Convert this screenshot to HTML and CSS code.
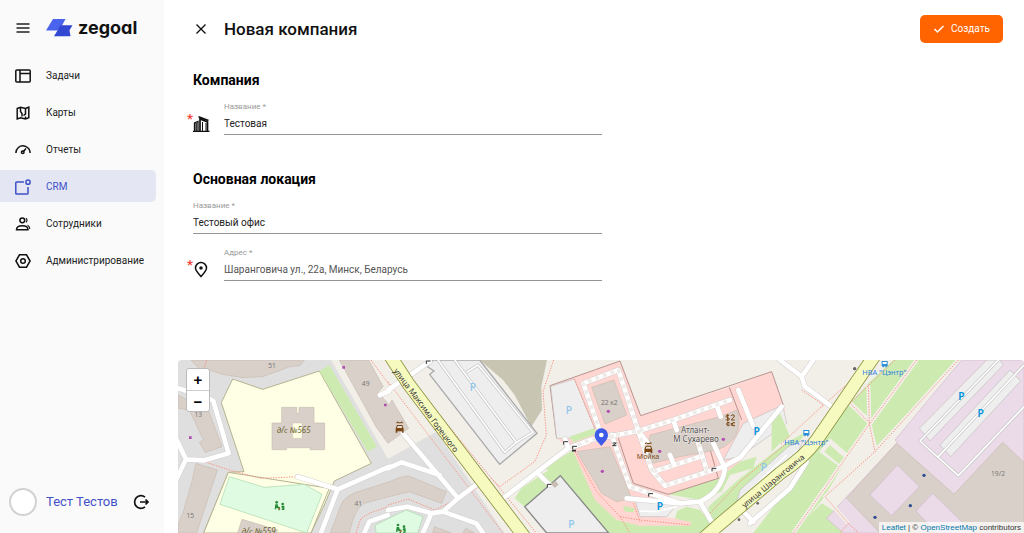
FILE: index.html
```html
<!DOCTYPE html>
<html lang="ru">
<head>
<meta charset="utf-8">
<title>Новая компания</title>
<link rel="stylesheet" href="styles.css">
</head>
<body>
<div class="app">
  <aside class="sidebar">
    <div class="brand">
      <button class="icon-btn" aria-label="Меню"><svg width="14" height="12" viewBox="0 0 14 12" stroke="#222" stroke-width="1.5"><path d="M0.500 2h13M.5 6h13M.5 10h13"/></svg></button>
      <a class="logo" href="#">
        <svg width="28" height="18" viewBox="0 0 28 18"><path d="M7 0h12.500L16 6.500 11.500 11.500H0z" fill="#4a63ec"/><path d="M14.500 6.300H26.500l-3 5L24.500 17.300H8l3.500-5.800z" fill="#3348d2"/></svg>
        <span>zegoal</span>
      </a>
    </div>
    <nav class="menu">
      <a href="#"><svg viewBox="0 0 16 16"><rect x=".8" y="2" width="14.400" height="12" rx="1"/><path d="M5 2v12M5 5.500h10" /></svg>Задачи</a>
      <a href="#"><svg viewBox="0 0 16 16"><path d="M2.200 3.500 5.500 2.200l5 1.300 3.300-1.300v10.500l-3.300 1.300-5-1.300-3.300 1.300zM5.500 2.500v4l1.500 2v3M10.500 3.500v5.500l-2 1.500M10.500 11.500v2"/></svg>Карты</a>
      <a href="#"><svg viewBox="0 0 16 16"><path d="M.9 11a7.100 7.100 0 0 1 2.500-5.500A7.200 7.200 0 0 1 15.100 11"/><path d="m8 10 3-3.500"/><circle cx="7.700" cy="10.200" r="1.300"/></svg>Отчеты</a>
      <a href="#" class="active"><svg viewBox="0 0 16 16"><path d="M9 3H1.500a.7.7 0 0 0-.7.700v10.500c0 .5.300.8.800.8h10.600c.5 0 .8-.3.800-.8V8"/><circle cx="13" cy="3.200" r="2.100"/></svg>CRM</a>
      <a href="#"><svg viewBox="0 0 16 16"><circle cx="7.300" cy="4.300" r="2.400"/><path d="M1.500 13.800c0-2.500 2-4 5.800-4s5.700 1.500 5.700 4z"/><path stroke-width="1.100" d="M11 2.200c1.300 1 1.300 3.200 0 4.200M12.500 9.300c1.500.8 2.300 2 2.300 3.700"/></svg>Сотрудники</a>
      <a href="#"><svg viewBox="0 0 16 16"><path d="M4.500 1.800h7L15.100 8l-3.600 6.200h-7L.9 8z"/><circle cx="8" cy="8" r="2.300"/></svg>Администрирование</a>
    </nav>
    <div class="user">
      <span class="avatar"></span>
      <a href="#" class="user-name">Тест Тестов</a>
      <button class="icon-btn" aria-label="Выйти"><svg width="17" height="16" viewBox="0 0 17 16" fill="none" stroke="#111" stroke-width="1.700"><path d="M12 3.200A6.300 6.300 0 1 0 12 12.800M7 8h8M12.500 5.500 15 8l-2.500 2.500"/></svg></button>
    </div>
  </aside>

  <main class="main">
    <header class="topbar">
      <button class="icon-btn" aria-label="Закрыть"><svg width="12" height="12" viewBox="0 0 12 12" stroke="#111" stroke-width="1.400"><path d="m1.500 1.500 9 9M10.500 1.500l-9 9"/></svg></button>
      <h1>Новая компания</h1>
      <button class="create"><svg width="12" height="10" viewBox="0 0 12 10" fill="none" stroke="#fff" stroke-width="1.500"><path d="m1.500 5 3 3L10.500 2"/></svg>Создать</button>
    </header>

    <form class="form">
      <h2>Компания</h2>
      <div class="row">
        <span class="mark">
          <b class="star">*</b>
          <svg width="18" height="18" viewBox="0 0 18 18" fill="none" stroke="#111" stroke-width="1.300"><path d="M0 16.300h16.500M1.500 16V8L5 6.500V16M3.200 8v8" /><path d="M7 16V4l7.500 3v9M5.500 1.800l10 3.700" stroke-width="1.700"/><path d="M9.500 7v9M13 8v8" stroke-width="1"/></svg>
        </span>
        <div class="field"><label for="company">Название *</label><input id="company" value="Тестовая"></div>
      </div>
      <h2>Основная локация</h2>
      <div class="field"><label for="office">Название *</label><input id="office" value="Тестовый офис"></div>
      <div class="row">
        <span class="mark">
          <b class="star">*</b>
          <svg width="18" height="18" viewBox="0 0 18 18" fill="none" stroke="#111" stroke-width="1.500"><path d="M8 15.500C5 12 2.500 9.800 2.500 7a5.500 5.500 0 0 1 11 0C13.500 9.800 11 12 8 15.500z"/><circle cx="8" cy="7" r="1" fill="#111"/></svg>
        </span>
        <div class="field"><label for="address">Адрес *</label><input id="address" class="muted" value="Шаранговича ул., 22а, Минск, Беларусь"></div>
      </div>
    </form>

    <section class="map" aria-label="Карта">
      <svg class="tiles" viewBox="0 0 2538 519" preserveAspectRatio="xMidYMid slice">
        <defs>
          <path id="street-m" d="M16 48 230 335"/>
          <path id="street-s" d="M614 460 850 264"/>
          <g id="roads">
            <path transform="translate(-6 -15)" d="M0 98 40 110M98 130 112 138 158 295 85 316 30 313 0 250M30 313 0 375M365 365 485 403 640 335M485 403 435 534M636 480 580 500 565 534M612 120 640 108"/>
            <path transform="translate(630 -15)" d="M0 105 125 20M45 235 210 430 270 385M0 340 40 322 155 360M345 430 540 280 600 260M450 355 485 390M0 465 60 455 130 475 165 470 210 430M165 470 265 505 285 534M130 475 105 534"/>
            <path transform="translate(1086 -15)" d="M90 278 150 255 295 228 400 195 570 135M180 230 130 85 235 45 295 228 335 345 375 392 550 335 600 308 725 155M215 240 270 395 420 445 480 440Q545 410 555 340L520 265M595 105 640 215M530 150 542 185M400 195 410 225M475 265 500 345M340 350 480 305M390 300 400 325M295 228 320 260M260 430 420 445M480 440 520 510M75 252 85 280M800 320 750 400 630 505M610 470 640 500"/>
            <path transform="translate(1806 -15)" d="M0 15 65 65 75 95 155 155M65 65 100 15"/>
          </g>
          <g id="streets">
            <path transform="translate(630 -15)" d="M5 0 60 85 420 560"/>
            <path transform="translate(1806 -15)" d="M-240 560-190 515 0 355Q75 305 110 255L285 0"/>
          </g>
        </defs>
        <rect width="2538" height="519" fill="#f2efe9"/>

        <!-- residential blocks -->
        <g transform="translate(-6 -15)">
          <path class="res" d="M6 15H465L636 312 781 230 985 534H6z"/>
          <path class="bld" d="M45 15H385L372 32 345 34 260 65 200 68 140 58 100 45 78 50z"/>
          <path class="bld" d="M6 120 98 168 138 275 88 292 70 262 82 255 40 165 6 160zM60 325 124 345 62 534H6V510L22 470 30 440 38 415 50 370z"/>
          <path class="bld" d="M490 15H578L622 95 606 112 640 150 648 135 698 220 636 265 600 215z"/>
          <path class="bld" d="M463 534 495 450Q505 425 540 412L640 380 670 368 696 362 811 410 797 445 700 410 620 430 565 445Q535 460 520 534z"/>
          <path class="bld" d="M775 515 826 534H770zM870 520 895 534H860z"/>
          <path class="school" d="M170 72 260 103 430 48 586 325 475 378 445 450 405 534H83L157 352 204 350 136 143z"/>
          <path class="school" d="M157 352 460 400 405 534H83z"/>
          <path class="green" d="M430 48 460 30 603 275 575 290z"/>
          <path class="play" d="M160 365 265 397 385 388 438 418 392 534 132 448zM600 534 598 510 690 465 741 485 725 534z"/>
          <path class="bld" d="M317 157H362V175H369V157H414V204H446V284H402V278H332V284H288V204H317z"/>
          <path d="M350 204H378V250H350z" fill="#ffffe5" stroke="#c6b8ac"/>
          <path class="bld" d="M198 493 305 525 300 534H185z"/>
        </g>

        <!-- parking lots and wasteland by the avenue -->
        <g transform="translate(630 -15)">
          <path d="M275 15H477L460 95 462 165 430 215 380 120 345 75z" fill="#c8c6b3"/>
          <path class="park edge" d="M135 15H275L447 235 335 328 125 58 138 48 118 35z"/>
          <path class="lane-c" d="M150 15 350 292 385 262 435 232 270 30 235 52M200 15 385 262"/>
          <path class="lane" d="M150 15 350 292 385 262 435 232 270 30 235 52M200 15 385 262"/>
          <path class="green" d="M380 430 400 400 550 300 640 420V505L515 362 410 455z"/>
        </g>

        <!-- shopping area -->
        <g transform="translate(1086 -15)">
          <path class="green" d="M10 340 100 285 160 420 235 495 400 505 412 468 440 455 480 465 520 510 500 534H200L60 362z"/>
          <path class="green" d="M385 418 535 370 550 335 600 320 650 305 640 340 570 360 545 410 480 435zM505 480V455L600 370 740 262 800 230 750 300 545 480 520 505z"/>
          <path class="retail" d="M30 92 240 18 302 182 568 97 695 50 735 165 600 320 535 370 385 418 400 440 300 440 300 480 400 490 455 502 450 512 300 512 230 495 165 435 100 290 50 250z"/>
          <path d="M30 92 240 18 302 182 695 50 730 150M568 97 605 195M30 92 50 250M235 250 280 385 385 418 535 370 505 265" fill="none" stroke="#b89490" stroke-width="3"/>
          <path class="park" d="M32 94 103 72 165 222 90 250 50 250zM610 205 728 150 740 205 600 305 550 315zM285 435 415 445 380 485 300 485z"/>
          <path class="green" d="M88 245 160 220 175 235 100 262z"/>
          <path class="bld" d="M155 97 222 75 260 180 195 207zM330 240 540 185 590 165Q605 200 590 235 575 270 530 285L420 305 335 325 320 285zM110 290 210 275 275 430 230 440 185 415z"/>
          <path class="park dark" d="M-46 455 61 362 206 534H20z"/>
          <path class="green" d="M248 452 285 460 280 472 255 470z"/>
          <path class="park" d="M590 440 600 405 745 275 790 255 770 300 620 425z"/>
          <path class="lane" d="M605 430 740 300M300 468 350 470 410 455"/>
        </g>

        <!-- industrial zone -->
        <g transform="translate(1806 -15)">
          <path class="green" d="M-80 534 0 430 60 340 205 150 265 205 130 430 45 534zM340 15H405L275 195 215 140 265 85zM415 15H540L290 272 275 210zM85 485 125 445 165 470 140 490 190 534H40z"/>
          <path d="M117 290 150 250 208 300 185 340z" fill="#f2efe9"/>
          <path class="green" d="M133 290 150 270 193 308 178 328z"/>
          <path class="green" d="M0 175 30 245 0 265-25 290V200z"/>
          <path class="ind" d="M545 15H732V534H190L140 490 352 262 345 255z"/>
          <path class="bld" d="M200 430 350 265 522 418 668 262 732 322V534H300z"/>
          <path class="ind" d="M352 330 418 395 335 482 270 420zM458 415 580 534H470L408 468z"/>
          <path class="park" d="M418 220 620 15H660L670 30 450 258zM480 270 690 45 722 78 512 305z"/>
          <path class="lane-c" d="M655 15 420 258 535 362 732 155M732 30 475 305"/>
          <path class="lane" d="M655 15 420 258 535 362 732 155M732 30 475 305"/>
        </g>

        <!-- foot paths -->
        <g class="foot-bed">
          <path transform="translate(1806 -15)" d="M265 90 268 205 285 290M410 15 270 205 40 534M535 15 285 290 135 425 205 505M210 145 270 205"/>
        </g>
        <g class="foot">
          <path transform="translate(-6 -15)" d="M92 15 84 40M90 322 160 345 255 370 370 365M585 15 640 90M540 534 555 490 580 475 636 455"/>
          <path transform="translate(630 -15)" d="M0 80 345 534M85 95 445 534M497 15 465 110 475 240 440 320 335 395 310 370M0 450 60 432 140 465 200 435M250 410 310 370"/>
          <path transform="translate(1086 -15)" d="M103 72 165 222M105 290 170 410 240 485 300 495 450 510M240 485 270 534M275 430 300 500M505 480 600 380 740 265M550 490 750 320"/>
          <path transform="translate(1806 -15)" d="M265 90 268 205 285 290M410 15 270 205 40 534M535 15 285 290 135 425 205 505 235 534M210 145 270 205M65 105 130 150 0 270M205 505 180 534M125 155 210 80M345 15 210 145"/>
        </g>

        <!-- roads -->
        <use href="#roads" class="road-c"/>
        <use href="#roads" class="road"/>
        <path class="private" transform="translate(1086 -15)" d="M90 278 150 255 295 228 400 195 570 135M180 230 130 85 235 45 295 228 335 345 375 392 535 340M215 240 270 395 340 418M475 265 500 345M340 350 480 305"/>
        <use href="#streets" class="main-c"/>
        <use href="#streets" class="main-r"/>

        <!-- points -->
        <g fill="#b14fb1">
          <path d="M493 18h8v8h-8zM618 131h8v8h-8zM33 229h8v8h-8z"/>
          <circle cx="1291" cy="154" r="5"/><circle cx="1273" cy="334" r="5"/><circle cx="1445" cy="274" r="5"/><circle cx="1636" cy="238" r="5"/>
        </g>
        <g fill="#2d4e92"><circle cx="2238" cy="346" r="5"/><circle cx="2197" cy="437" r="5"/><circle cx="2091" cy="472" r="5"/></g>
        <g fill="#666"><circle cx="2030" cy="26" r="5"/><circle cx="1683" cy="479" r="4"/><circle cx="1739" cy="430" r="4"/></g>
        <path d="M745 12V3h13M1157 254v-9h13M1184 268v-9h13M1108 382v-9h13M1412 410v-9h13M1602 334v-9h13M1304 249h11l-11 8h11" fill="none" stroke="#333" stroke-width="3"/>
        <path d="M1182 272h12" stroke="#333" stroke-width="5"/>
        <path d="M1120 371 1132 362 1142 374 1130 384z" fill="#c9bdb4"/>
        <g id="kids">
          <g fill="#268a36"><circle cx="296" cy="427" r="4"/><path d="M292 433h7l2 7 5 1v4h-8l-3-2-1 5h-4zM311 437h8v10l-6 0v-4h-3z"/><circle cx="314" cy="432" r="4"/><path d="M311 447h8v3h-8zM301 446h4v5h-4z"/></g>
          <circle cx="304" cy="446" r="3" fill="#a5652a"/>
        </g>
        <use href="#kids" x="364" y="68"/>
        <g id="car">
          <path fill="#7a4714" d="M653 206l4-11h16l4 11v12h-5v-4h-14v4h-5zM655 190c1-7 5-6 6-3h8c1-3 5-4 6 3h-3c0-2-2-2-3 0h-8c-1-2-3-2-3 0z"/>
          <path fill="#e8dfd8" d="M659 198h12l2 6h-16z"/>
        </g>
        <use href="#car" x="746" y="62"/>
        <g id="bus"><path fill="#2a8fd6" d="M2111 3h18v16h-3v3h-4v-3h-4v3h-4v-3h-3z"/><path d="M2114 6h12v6h-12z" fill="#fff"/></g>
        <use href="#bus" x="-235" y="207"/>

        <!-- captions -->
        <g class="cap">
          <g class="num"><text x="282" y="25">51</text><text x="563" y="78">49</text><text x="61" y="171">13</text><text x="37" y="473">15</text><text x="541" y="438">41</text><text x="1294" y="134">22 к2</text><text x="2460" y="348">19/2</text></g>
          <g class="edu"><text x="347" y="218">д/с №565</text><text x="242" y="521">д/с №559</text></g>
          <g class="pk lite"><text x="885" y="93">P</text><text x="1173" y="161">P</text><text x="1180" y="504">P</text><text x="1758" y="334">P</text></g>
          <g class="pk"><text x="1736" y="225">P</text><text x="1446" y="449">P</text><text x="2350" y="119">P</text><text x="2408" y="171">P</text></g>
          <g class="stop"><text x="2119" y="46">НВА "Цэнтр"</text><text x="1885" y="256">НВА "Цэнтр"</text></g>
          <g class="shop"><text x="1552" y="218">Атлант-</text><text x="1554" y="247">М Сухарево</text></g>
          <text class="wash" x="1410" y="298">Мойка</text>
        </g>
        <path d="M1654 168c-1-4-10-4-10 1s10 3 10 8-9 5-10 1M1649 162v22M1660 168c1-5 9-5 9 0s-9 8-9 12h10M1655 189c-2-3-9-3-9 3s7 6 9 3M1650 186v12M1671 189c-4-3-9-1-9 4s5 6 9 3M1658 191h8M1658 195h8" fill="none" stroke="#7a4714" stroke-width="3"/>
        <g class="street">
          <text transform="translate(630 -15)"><textPath href="#street-m">улица Максима Горецкого</textPath></text>
          <text transform="translate(1086 -15)"><textPath href="#street-s">улица Шаранговича</textPath></text>
        </g>

        <!-- company marker -->
        <path d="M1270 258c-12-15-20-20-20-33a20 20 0 0 1 40 0c0 13-8 18-20 33z" fill="#3d5be8"/><circle cx="1270" cy="225" r="7" fill="#fff"/>
      </svg>
      <div class="zoom"><button aria-label="Приблизить">+</button><button aria-label="Отдалить">−</button></div>
      <div class="credits"><a href="#">Leaflet</a> | © <a href="#">OpenStreetMap</a> contributors</div>
    </section>
  </main>
</div>
</body>
</html>
```
FILE: styles.css
```css
* { box-sizing: border-box; }
body { margin: 0; font: 10px/16px Roboto, "Noto Sans", sans-serif; color: #222; background: #fff; }
button, input { font: inherit; color: inherit; border: 0; padding: 0; background: none; }
a { text-decoration: none; color: inherit; }
svg { display: block; }
.app { display: flex; min-height: 100vh; }

.sidebar { width: 164px; flex: none; display: flex; flex-direction: column; background: #fafafa; }
.brand { display: flex; align-items: center; gap: 16px; height: 56px; padding-left: 16px; }
.icon-btn { flex: none; cursor: pointer; }
.logo { display: flex; align-items: center; gap: 4px; color: #111; font: 700 18px/24px Inter, sans-serif; font-feature-settings: "cv11"; }
.menu { display: flex; flex-direction: column; gap: 5px; padding: 3px 8px 0 0; }
.menu a { display: flex; align-items: center; gap: 15px; height: 32px; padding: 1px 0 0 15px; border-radius: 0 5px 5px 0; }
.menu svg { width: 16px; height: 16px; fill: none; stroke: #111; stroke-width: 1.5px; }
.menu .active { background: #e4e6f4; color: #3f51c8; }
.menu .active svg { stroke: #3f51c8; }
.user { margin-top: auto; display: flex; align-items: center; gap: 9px; padding: 0 14px 17px 9px; }
.avatar { width: 28px; height: 28px; border: 2px solid #d2d2d2; border-radius: 50%; background: #fff; }
.user-name { flex: 1; color: #3f51c8; font-size: 13px; white-space: nowrap; }

.main { flex: 1; min-width: 0; display: flex; flex-direction: column; }
.topbar { display: flex; align-items: center; gap: 17px; height: 57px; padding: 0 21px 0 31px; }
h1 { margin: 0; flex: 1; color: #111; font-size: 17px; line-height: 24px; font-weight: 500; }
.create { display: flex; align-items: center; justify-content: center; gap: 6px; width: 83px; height: 28px; border-radius: 5px; background: #ff6400; color: #fff; }

.form { width: 438px; padding: 13px 0 79px 29px; }
h2 { margin: 0 0 12px; color: #000; font-size: 14px; line-height: 20px; font-weight: 700; }
.row { display: flex; align-items: flex-end; margin-bottom: 34px; }
.row:last-child { margin: 14px 0 0; }
.mark { position: relative; width: 31px; height: 20px; flex: none; }
.star { position: absolute; left: -6px; top: -4px; color: #f44336; font-size: 13px; }
.field { flex: 1; border-bottom: 1px solid #949494; }
.field label { display: block; color: #999; font-size: 8px; line-height: 10px; }
.field input { display: block; width: 100%; height: 22px; outline: 0; }
.field .muted { color: #555; }

.map { position: relative; flex: 1; min-height: 173px; margin-left: 14px; overflow: hidden; border-radius: 4px 4px 0 0; }
.tiles { position: absolute; width: 100%; height: 100%; }
.zoom { position: absolute; left: 8px; top: 8px; border: 1px solid #bbb; border-radius: 3px; background: #fff; }
.zoom button { display: block; width: 22px; height: 21px; color: #000; font: bold 15px/21px "Liberation Sans", sans-serif; }
.zoom button + button { border-top: 1px solid #ccc; }
.credits { position: absolute; right: 0; bottom: 0; padding: 0 3px; background: rgba(255, 255, 255, .7); color: #333; font: 8px/11px "Liberation Sans", sans-serif; white-space: nowrap; }
.credits a { color: #0078a8; }

.res { fill: #e0dfdf; }
.bld { fill: #d9d0c9; stroke: #c8bcb2; stroke-width: 2; }
.school { fill: #ffffe5; stroke: #b5b391; stroke-width: 3; }
.green { fill: #cdebb0; }
.play { fill: #dffce2; stroke: #a8d8ae; stroke-width: 2; }
.park { fill: #eee; stroke: #c4bcbc; stroke-width: 2; }
.park.edge { stroke: #aaa; stroke-width: 4; }
.park.dark { stroke: #888; stroke-width: 4; }
.retail { fill: #ffd6d1; }
.ind { fill: #ebdbe8; stroke: #d0b9cc; stroke-width: 2; }
.lane-c, .lane, .foot, .foot-bed, .road, .road-c, .private, .main-c, .main-r { fill: none; stroke-linejoin: round; }
.lane-c { stroke: #c4c4c4; stroke-width: 9; }
.lane { stroke: #fff; stroke-width: 5; }
.foot-bed { stroke: #f2efe9; stroke-width: 12; }
.foot { stroke: #fa9080; stroke-width: 3; stroke-dasharray: 4 4; }
.road, .road-c { stroke-linecap: round; }
.road-c { stroke: #d2cdcd; stroke-width: 17; }
.road { stroke: #fff; stroke-width: 14; }
.private { stroke: #efebe8; stroke-width: 10; stroke-dasharray: 12 12; }
.main-c { stroke: #8b9440; stroke-width: 41; }
.main-r { stroke: #f7fabf; stroke-width: 36; }
.cap { text-anchor: middle; font-family: "Noto Sans", sans-serif; }
.num { fill: #777; font-size: 20px; }
.edu { fill: #6b5f2a; font-size: 24px; font-style: italic; }
.pk { fill: #0092da; font: 600 31px "Noto Sans", sans-serif; }
.pk.lite { fill: #8cc5ec; font-weight: 500; }
.stop { fill: #2f7fe0; font-size: 22px; }
.shop { fill: #555; font-size: 24px; paint-order: stroke; stroke: #eee8e4; stroke-width: 3px; }
.wash { fill: #7a4714; font-size: 21px; }
.street { fill: #333; font-family: "Noto Sans", sans-serif; font-size: 24px; }
```
